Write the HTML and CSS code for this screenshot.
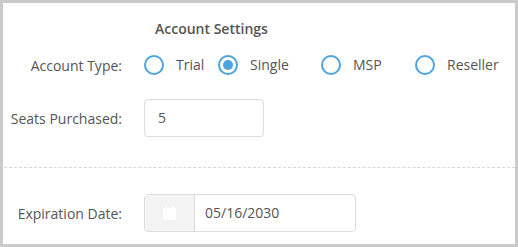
FILE: index.html
```html
<!DOCTYPE html>
<html lang="en">
<head>
    <meta charset="UTF-8">
    <title>Account Settings</title>
    <link rel="stylesheet" href="styles.css">
</head>
<body>
    <div class="panel">
        <h3 class="title">Account Settings</h3>
        <div class="row">
            <label class="row-label">Account Type:</label>
            <div class="radios">
                <label class="radio"><span class="dot"></span>Trial</label>
                <label class="radio"><span class="dot checked"></span>Single</label>
                <label class="radio"><span class="dot"></span>MSP</label>
                <label class="radio"><span class="dot"></span>Reseller</label>
            </div>
        </div>
        <div class="row row-seats">
            <label class="row-label" for="seats">Seats Purchased:</label>
            <div class="field seats">5</div>
        </div>
        <hr class="divider">
        <div class="row">
            <label class="row-label">Expiration Date:</label>
            <div class="date-group">
                <span class="addon">
                    <svg width="13" height="14" viewBox="0 0 13 14">
                        <rect x="0" y="2" width="13" height="12" rx="1" fill="#fff"/>
                        <rect x="2" y="0" width="2" height="3" fill="#fff"/>
                        <rect x="9" y="0" width="2" height="3" fill="#fff"/>
                    </svg>
                </span>
                <span class="date-value">05/16/2030</span>
            </div>
        </div>
    </div>
</body>
</html>
```

FILE: styles.css
```css
body {
    margin: 0;
    font-family: "Open Sans", Arial, sans-serif;
    font-size: 14px;
    color: #555;
}
.panel {
    width: 518px;
    height: 247px;
    box-sizing: border-box;
    border: 3px solid #cbcbcb;
    background: #fff;
    padding-top: 16px;
}
.title {
    margin: 0;
    padding-left: 152px;
    font-size: 14px;
    font-weight: 600;
    line-height: 20px;
    color: #555;
}
.row {
    display: grid;
    grid-template-columns: 119px 1fr;
    column-gap: 22px;
    align-items: center;
}
.title + .row {
    margin-top: 16px;
}
.row-seats {
    margin-top: 24px;
}
.row-label {
    text-align: right;
}
.radios {
    display: grid;
    grid-template-columns: 74px 103px 94px auto;
    height: 20px;
}
.radio {
    display: flex;
    align-items: center;
    line-height: 20px;
}
.dot {
    width: 16px;
    height: 16px;
    border: 2px solid #4ca3df;
    border-radius: 50%;
    margin-right: 12px;
    position: relative;
}
.dot.checked::after {
    content: "";
    position: absolute;
    left: 3px;
    top: 3px;
    width: 10px;
    height: 10px;
    border-radius: 50%;
    background: #4ca3df;
}
.field {
    box-sizing: border-box;
    height: 38px;
    border: 1px solid #dcdcdc;
    border-radius: 4px;
    line-height: 36px;
    padding-left: 13px;
}
.seats {
    width: 120px;
}
.divider {
    border: 0;
    border-top: 1px dashed #d6d6d6;
    margin: 30px 0 26px 1px;
}
.date-group {
    display: flex;
    width: 212px;
    height: 38px;
    box-sizing: border-box;
    border: 1px solid #dcdcdc;
    border-radius: 4px;
    overflow: hidden;
}
.addon {
    width: 49px;
    background: #f3f3f3;
    border-right: 1px solid #dcdcdc;
    display: flex;
    align-items: center;
    justify-content: center;
}
.date-value {
    line-height: 36px;
    padding-left: 10px;
}
```
